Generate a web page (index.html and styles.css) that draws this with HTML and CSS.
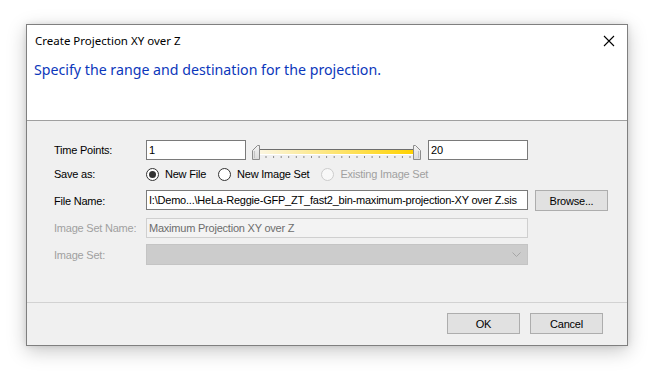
FILE: index.html
```html
<!DOCTYPE html>
<html>
<head>
<meta charset="utf-8">
<link rel="stylesheet" href="styles.css">
</head>
<body>
<div class="window">
  <div class="titlebar">
    <span class="title">Create Projection XY over Z</span>
    <svg class="close" width="12" height="12" viewBox="0 0 12 12"><path d="M1 1L11 11M11 1L1 11" stroke="#000" stroke-width="1.1" fill="none"/></svg>
  </div>
  <div class="header">
    <div class="instruction">Specify the range and destination for the projection.</div>
  </div>
  <div class="form">
    <div class="row row1">
      <div class="label">Time Points:</div>
      <div class="textbox short">1</div>
      <svg class="slider" width="169" height="20" viewBox="0 0 169 20">
        <defs>
          <linearGradient id="fill" x1="0" x2="1" y1="0" y2="0">
            <stop offset="0" stop-color="#fbf6e2"/>
            <stop offset="1" stop-color="#ffd200"/>
          </linearGradient>
          <linearGradient id="thumb" x1="0" x2="0" y1="0" y2="1">
            <stop offset="0" stop-color="#f2f2f2"/>
            <stop offset="1" stop-color="#dcdcdc"/>
          </linearGradient>
        </defs>
        <rect x="7" y="9" width="155" height="1" fill="#6e6e6e"/>
        <rect x="7" y="10" width="155" height="4" fill="url(#fill)"/>
        <rect x="7" y="14" width="155" height="1" fill="#ffffff"/>
        <path d="M14 16v2M21.6 16v2M29.2 16v2M36.7 16v2M44.3 16v2M51.9 16v2M59.5 16v2M67.1 16v2M74.6 16v2M82.2 16v2M89.8 16v2M97.4 16v2M105 16v2M112.5 16v2M120.1 16v2M127.7 16v2M135.3 16v2M142.9 16v2M150.4 16v2M158 16v2" stroke="#8a8a8a" stroke-width="1"/>
        <polygon points="0.5,10.5 5.5,5.5 7.5,5.5 7.5,19.5 0.5,19.5" fill="url(#thumb)" stroke="#8c8c8c"/>
        <path d="M2.5 11v7" stroke="#c4c4c4"/>
        <polygon points="161.5,5.5 163.5,5.5 168.5,10.5 168.5,19.5 161.5,19.5" fill="url(#thumb)" stroke="#8c8c8c"/>
        <path d="M166.5 11v7" stroke="#c4c4c4"/>
      </svg>
      <div class="textbox short end">20</div>
    </div>
    <div class="row row2">
      <div class="label">Save as:</div>
      <div class="radios">
        <span class="radio checked"><span class="dot"></span></span><span class="rtext">New File</span>
        <span class="radio"></span><span class="rtext">New Image Set</span>
        <span class="radio disabled"></span><span class="rtext dis">Existing Image Set</span>
      </div>
    </div>
    <div class="row row3">
      <div class="label">File Name:</div>
      <div class="textbox long">I:\Demo...\HeLa-Reggie-GFP_ZT_fast2_bin-maximum-projection-XY over Z.sis</div>
      <div class="button browse">Browse...</div>
    </div>
    <div class="row row4">
      <div class="label dis">Image Set Name:</div>
      <div class="textbox long disabledbox">Maximum Projection XY over Z</div>
    </div>
    <div class="row row5">
      <div class="label dis">Image Set:</div>
      <div class="combo">
        <svg width="9" height="5" viewBox="0 0 9 5"><path d="M0.5 0.5L4.5 4.5L8.5 0.5" stroke="#a6a6a6" fill="none"/></svg>
      </div>
    </div>
  </div>
  <div class="footer">
    <div class="button">OK</div>
    <div class="button">Cancel</div>
  </div>
</div>
</body>
</html>
```
FILE: styles.css
```css
html, body {
  margin: 0;
  padding: 0;
  background: #ffffff;
}
body {
  width: 658px;
  height: 382px;
  overflow: hidden;
  font-family: "Liberation Sans", Arial, sans-serif;
  font-size: 11px;
  color: #000;
}
.window {
  box-sizing: border-box;
  margin: 24px 0 0 26px;
  width: 602px;
  height: 322px;
  border: 1px solid #7f7f7f;
  background: #f0f0f0;
  display: flex;
  flex-direction: column;
  box-shadow: 0 5px 18px rgba(0,0,0,0.22), 0 0 6px rgba(0,0,0,0.10);
}
.titlebar {
  height: 31px;
  flex: none;
  background: #fff;
  display: flex;
  align-items: center;
  justify-content: space-between;
  padding: 0 12px 0 8px;
}
.title {
  font-family: "Noto Sans", "Open Sans", sans-serif;
  font-size: 11.5px;
}
.close {
  display: block;
}
.header {
  box-sizing: border-box;
  height: 65px;
  flex: none;
  background: #fff;
  border-bottom: 1px solid #a0a0a0;
  padding: 4px 0 0 7px;
}
.instruction {
  font-family: "Noto Sans", "Open Sans", sans-serif;
  font-size: 14.2px;
  line-height: 20px;
  color: #0c37bb;
}
.form {
  flex: 1;
  padding: 19px 0 0 27px;
  display: flex;
  flex-direction: column;
  letter-spacing: -0.22px;
}
.row {
  display: flex;
  align-items: center;
}
.row1 { height: 20px; }
.row2 { height: 20px; margin-top: 4px; }
.row3 { height: 21px; margin-top: 6px; }
.row4 { height: 20px; margin-top: 7px; }
.row5 { height: 21px; margin-top: 6px; }
.label {
  width: 92px;
  flex: none;
}
.label.dis { color: #a0a0a0; }
.textbox {
  box-sizing: border-box;
  height: 20px;
  border: 1px solid #7a7a7a;
  background: #fff;
  padding: 0 0 0 2px;
  line-height: 18px;
  white-space: nowrap;
  overflow: hidden;
  align-self: flex-start;
}
.textbox.short { width: 100px; }
.textbox.long { width: 382px; }
.slider {
  display: block;
  margin-left: 6px;
  align-self: flex-start;
}
.textbox.end { margin-left: 7px; }
.disabledbox {
  background: #f3f3f3;
  border-color: #cfcfcf;
  color: #6d6d6d;
}
.radios {
  display: flex;
  align-items: center;
}
.radio {
  box-sizing: border-box;
  width: 13px;
  height: 13px;
  border: 1px solid #333;
  border-radius: 50%;
  background: #fff;
  display: flex;
  align-items: center;
  justify-content: center;
  margin-right: 6px;
}
.radio.disabled {
  border-color: #cccccc;
  background: #f8f8f8;
}
.dot {
  width: 7px;
  height: 7px;
  border-radius: 50%;
  background: #333;
}
.rtext { margin-right: 12px; }
.rtext.dis { color: #a0a0a0; }
.button {
  box-sizing: border-box;
  width: 73px;
  height: 21px;
  border: 1px solid #adadad;
  background: #e1e1e1;
  display: flex;
  align-items: center;
  justify-content: center;
  letter-spacing: -0.22px;
}
.browse { margin-left: 7px; }
.combo {
  box-sizing: border-box;
  width: 382px;
  height: 21px;
  background: #cccccc;
  border: 1px solid #c4c4c4;
  display: flex;
  align-items: center;
  justify-content: flex-end;
  padding-right: 6px;
}
.combo svg { display: block; }
.footer {
  box-sizing: border-box;
  height: 43px;
  flex: none;
  border-top: 1px solid #d2d2d2;
  display: flex;
  justify-content: flex-end;
  align-items: flex-start;
  padding: 10px 24px 0 0;
  gap: 10px;
}
```
